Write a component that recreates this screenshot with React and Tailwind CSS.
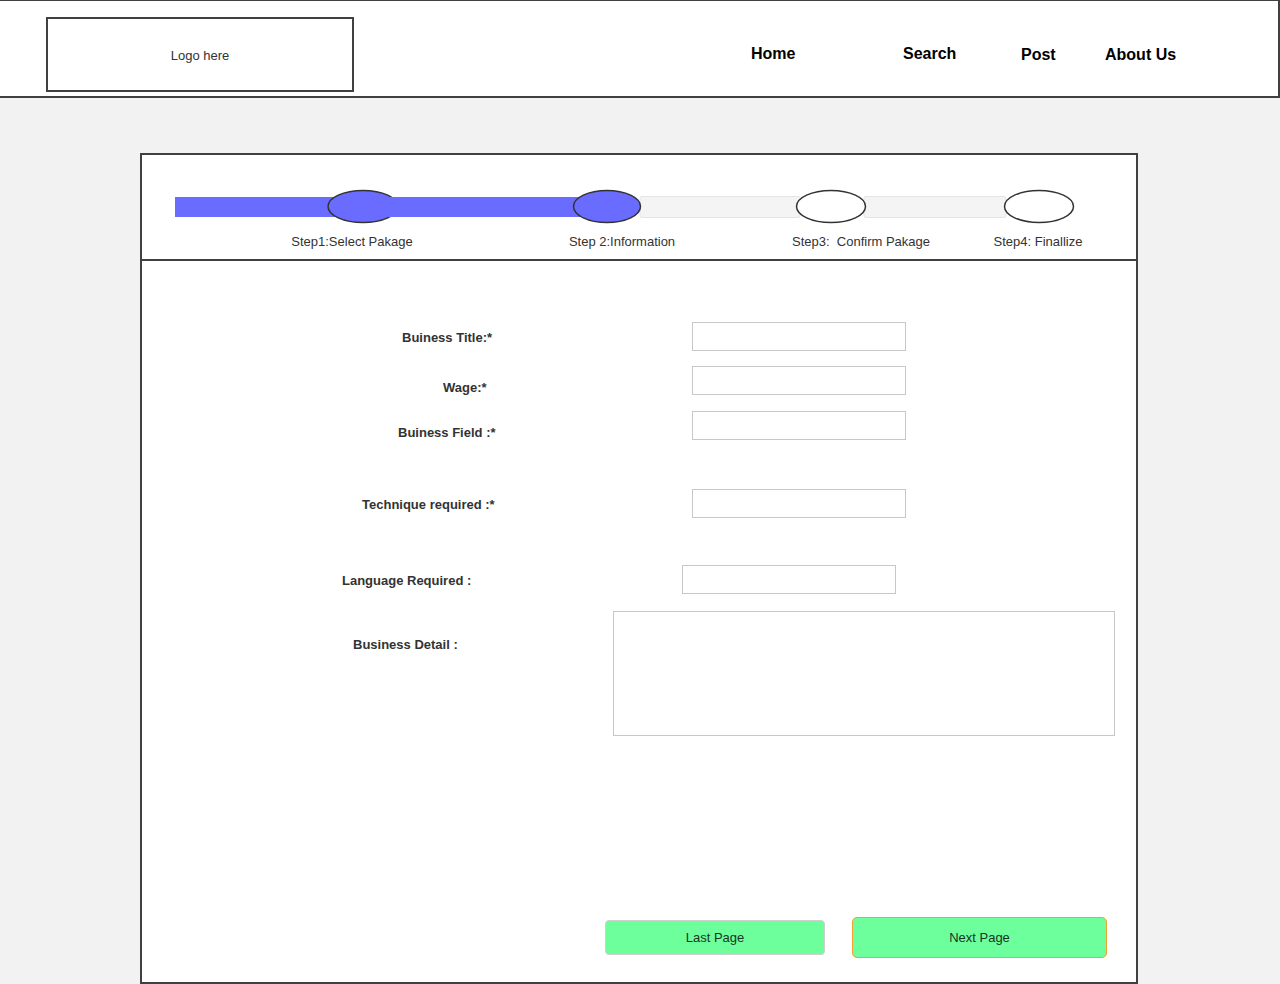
import React from 'react';

const rows = [
    { label: 'Buiness Title:*', labelX: 260, col: 550, labelTop: 8, mt: 61 },
    { label: 'Wage:*', labelX: 301, col: 550, labelTop: 14, mt: 15 },
    { label: 'Buiness Field :*', labelX: 256, col: 550, labelTop: 14, mt: 16 },
    { label: 'Technique required :*', labelX: 220, col: 550, labelTop: 8, mt: 49 },
    { label: 'Language Required :', labelX: 200, col: 540, labelTop: 8, mt: 47 },
];

const ProgressBar = () => (
    <svg width="994" height="40" className="block">
        {/* grey track */}
        <rect x="498" y="8.5" width="160" height="21" rx="2" fill="#f4f4f4" stroke="#e4e4e4" />
        <rect x="722" y="8.5" width="142" height="21" rx="2" fill="#f4f4f4" stroke="#e4e4e4" />
        {/* blue progress */}
        <rect x="33" y="9" width="190" height="20" fill="#696cff" />
        <ellipse cx="221" cy="18.5" rx="35" ry="16" fill="#696cff" stroke="#333" strokeWidth="1.5" />
        <rect x="246" y="9" width="200" height="20" fill="#696cff" />
        <ellipse cx="465" cy="18.5" rx="33.5" ry="16" fill="#696cff" stroke="#333" strokeWidth="1.5" />
        <rect x="440" y="9" width="30" height="20" fill="#696cff" />
        <ellipse cx="689" cy="18.5" rx="34.5" ry="16" fill="#fff" stroke="#333" strokeWidth="1.5" />
        <ellipse cx="897" cy="18.5" rx="34.5" ry="16" fill="#fff" stroke="#333" strokeWidth="1.5" />
    </svg>
);

const App = () => {
    return (
        <div className="min-h-[984px] bg-[#f2f2f2] font-['Liberation_Sans',Arial,sans-serif] text-[#333]">
            {/* header */}
            <header className="h-[98px] bg-white border-t border-r-2 border-b-2 border-[#404040] flex items-start">
                <div className="ml-[46px] mt-[16px] w-[308px] h-[75px] border-2 border-[#404040] flex items-center justify-center">
                    <span className="text-[13px] leading-[16px] mt-[2px]">Logo here</span>
                </div>
                <nav className="ml-[397px] mt-[43px] flex text-[16px] leading-[20px] font-bold text-black">
                    <span className="w-[152px]">Home</span>
                    <span className="w-[118px]">Search</span>
                    <span className="w-[84px] mt-[1px]">Post</span>
                    <span className="mt-[1px]">About Us</span>
                </nav>
            </header>

            <div className="pt-[55px]">
                <div className="ml-[140px] w-[998px] h-[831px] bg-white border-2 border-[#404040]">
                    {/* steps */}
                    <div className="h-[106px] pt-[33px] border-b-2 border-[#404040]">
                        <ProgressBar />
                        <div className="flex mt-[6px] text-[13px] leading-[16px] text-[#333]">
                            <span className="ml-[110px] w-[200px] text-center">Step1:Select Pakage</span>
                            <span className="ml-[70px] w-[200px] text-center">Step 2:Information</span>
                            <span className="ml-[39px] w-[200px] text-center whitespace-pre">Step3:  Confirm Pakage</span>
                            <span className="ml-[7px] w-[140px] text-center">Step4: Finallize</span>
                        </div>
                    </div>

                    {/* form */}
                    <form className="flex flex-col">
                        {rows.map((r) => (
                            <div key={r.label} className="flex items-start h-[29px]" style={{ marginTop: r.mt }}>
                                <div className="shrink-0" style={{ width: r.col }}>
                                    <label
                                        className="block text-[13px] leading-[16px] font-bold text-[#333]"
                                        style={{ paddingLeft: r.labelX, marginTop: r.labelTop }}
                                    >
                                        {r.label}
                                    </label>
                                </div>
                                <input type="text" className="w-[214px] h-[29px] border border-[#c8c8c8] bg-white outline-none" />
                            </div>
                        ))}
                        <div className="flex items-start mt-[17px]">
                            <div className="w-[471px] shrink-0">
                                <label className="block pl-[211px] mt-[26px] text-[13px] leading-[16px] font-bold text-[#333]">
                                    Business Detail :
                                </label>
                            </div>
                            <textarea className="w-[502px] h-[125px] border border-[#c8c8c8] bg-white outline-none resize-none" />
                        </div>

                        <div className="flex items-center ml-[463px] mt-[181px] h-[41px]">
                            <button type="button" className="w-[220px] h-[35px] rounded-[4px] border border-[#cfcfcf] bg-[#6cff9b] text-[13px] text-[#1c3326]">
                                Last Page
                            </button>
                            <button type="button" className="ml-[27px] w-[255px] h-[41px] rounded-[5px] border border-[#f0a030] bg-[#6cff9b] text-[13px] text-[#1c3326]">
                                Next Page
                            </button>
                        </div>
                    </form>
                </div>
            </div>
        </div>
    );
};

export default App;
